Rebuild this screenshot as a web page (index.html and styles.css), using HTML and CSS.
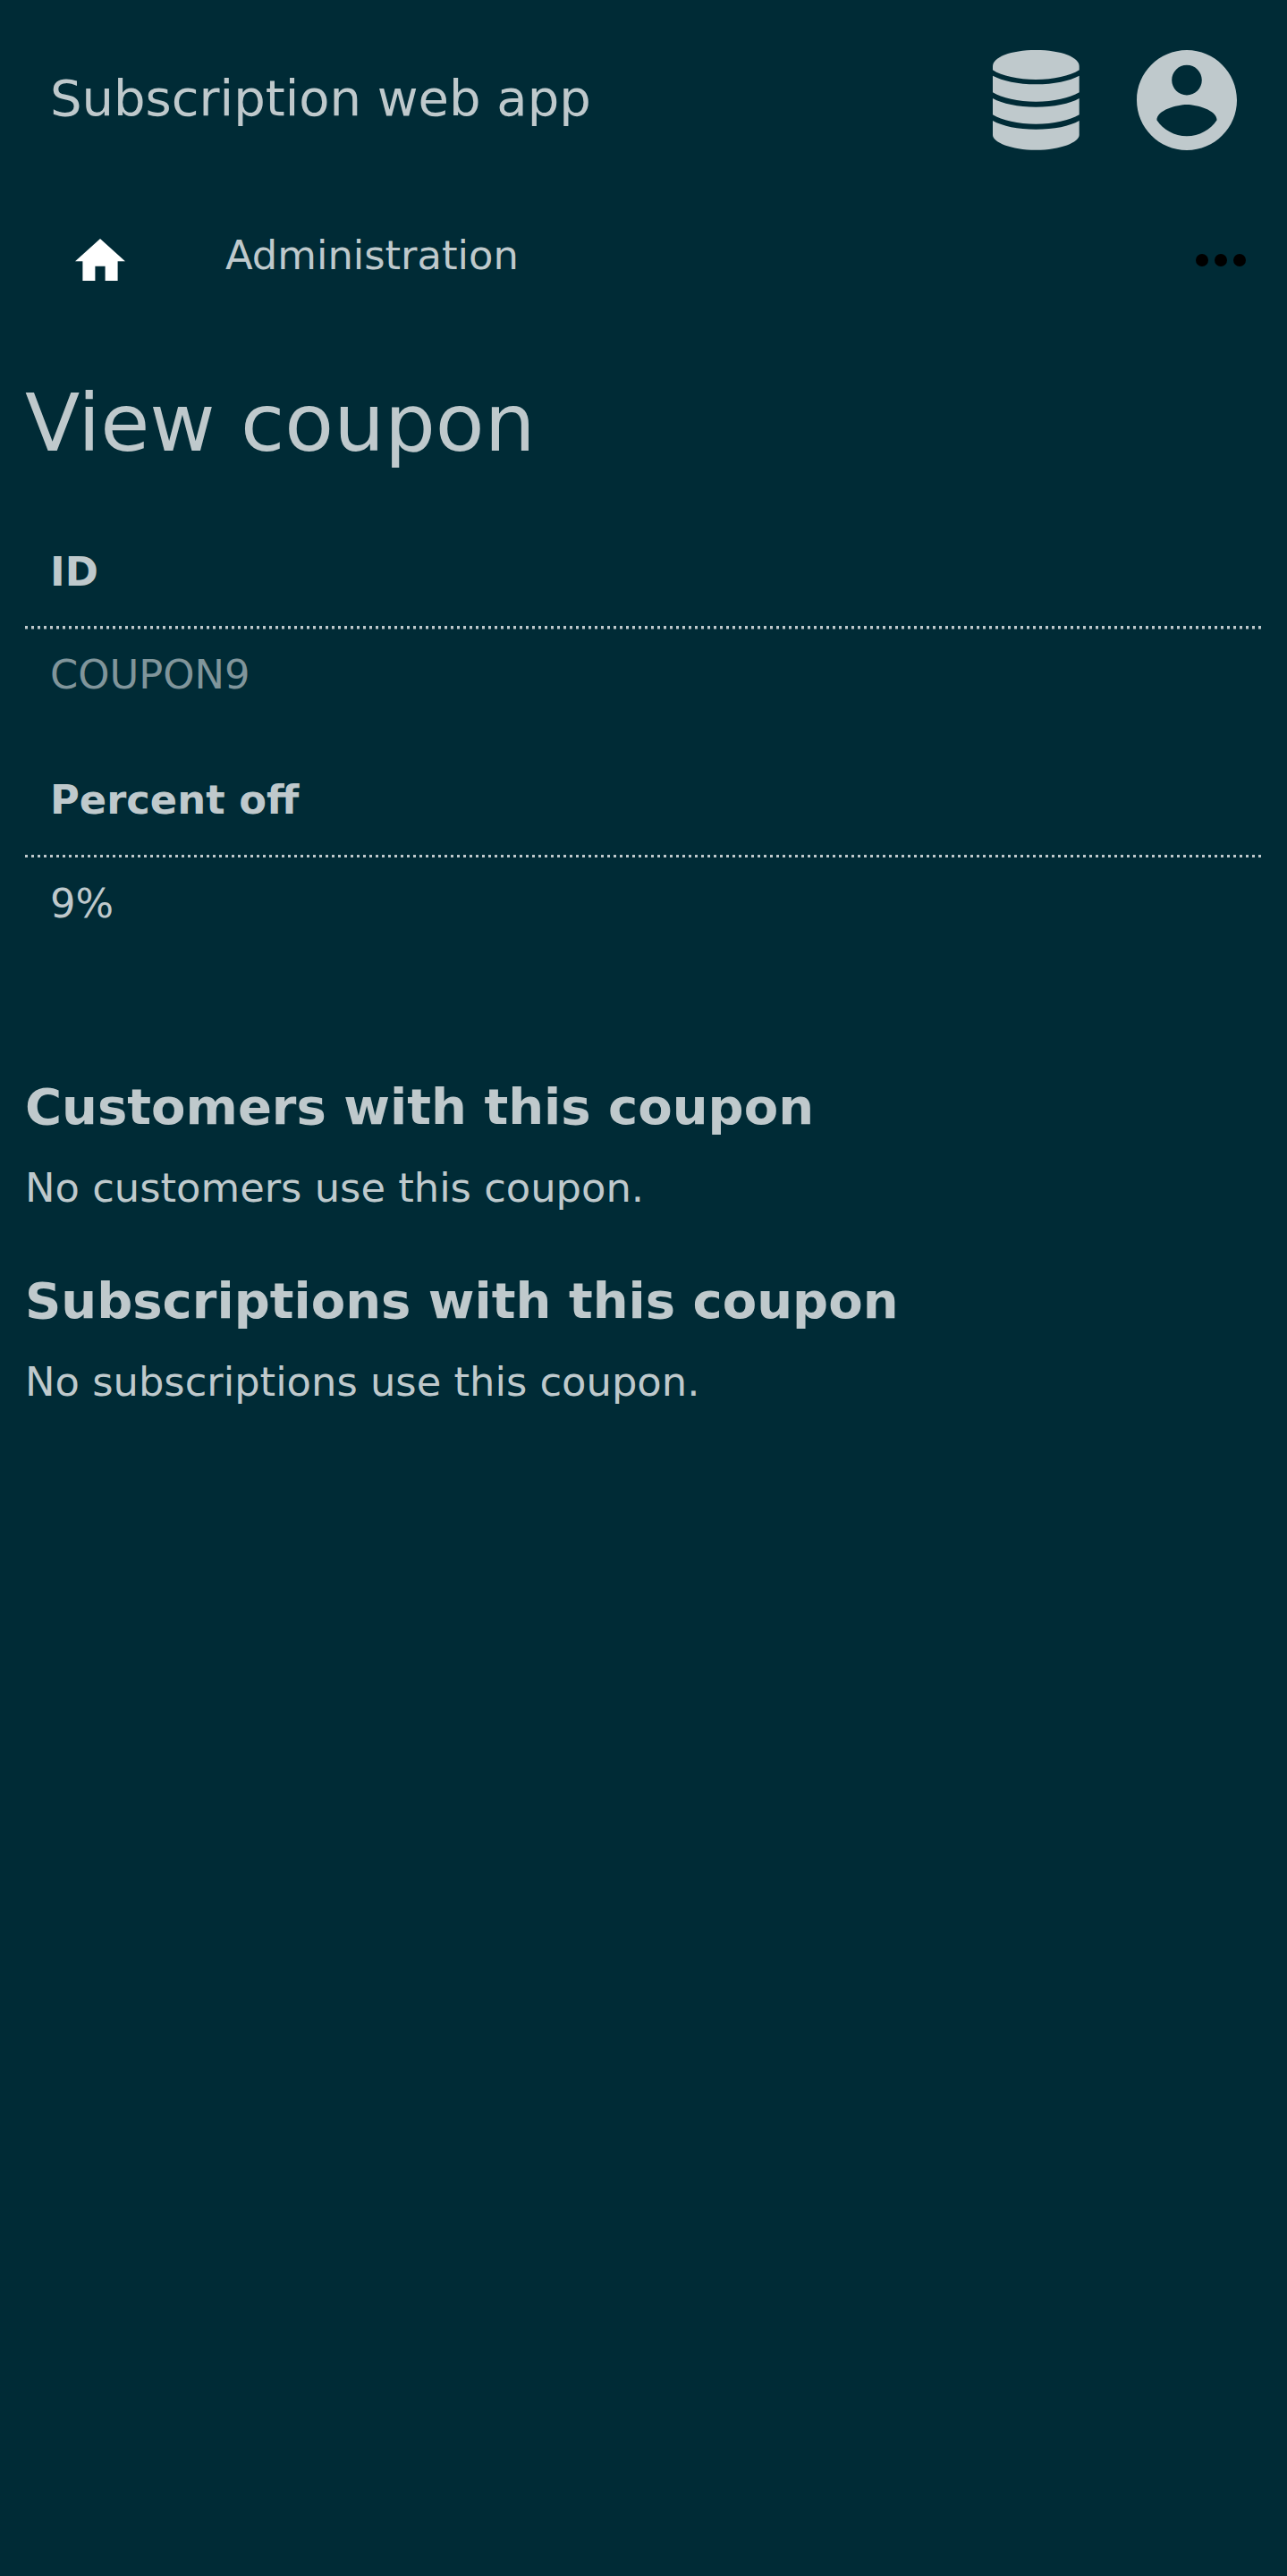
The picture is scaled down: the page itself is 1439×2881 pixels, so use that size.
FILE: index.html
```html
<!DOCTYPE html>
<html lang="en">
<head>
<meta charset="utf-8">
<title>View coupon</title>
<link rel="stylesheet" href="styles.css">
</head>
<body>
<header class="header">
  <div class="app-title">Subscription web app</div>
  <div class="menus">
    <svg class="database" viewBox="0 0 97 112" aria-label="Administrator">
      <path d="M0 18C0 8 20 0 48.3 0S96.7 8 96.7 18V22.3C86 29 68 33 48.3 33S10 29 0 22.3Z"/>
      <path d="M0 28.7C11 34.5 28 38.3 48.3 38.3S86 34.5 96.7 28.7V47.3C86 53.7 68 57.7 48.3 57.7S10 53.7 0 47.3Z"/>
      <path d="M0 54C11 60 28 63.7 48.3 63.7S86 60 96.7 54V72.3C86 78.7 68 82.7 48.3 82.7S10 78.7 0 72.3Z"/>
      <path d="M0 79C11 85 28 88.8 48.3 88.8S86 85 96.7 79V95C96.7 103 76 111.8 48.3 111.8S0 103 0 95Z"/>
    </svg>
    <svg class="account" viewBox="2 2 20 20" aria-label="Account">
      <path d="M12 2C6.48 2 2 6.48 2 12s4.48 10 10 10 10-4.48 10-10S17.52 2 12 2zm0 3c1.66 0 3 1.34 3 3s-1.34 3-3 3-3-1.34-3-3 1.34-3 3-3zm0 14.2c-2.5 0-4.71-1.28-6-3.22.03-1.99 4-3.08 6-3.08 1.99 0 5.97 1.09 6 3.08-1.29 1.94-3.5 3.22-6 3.22z"/>
    </svg>
  </div>
</header>
<nav class="nav">
  <svg class="home" viewBox="2 3 20 17" aria-label="Home"><path d="M10 20v-6h4v6h5v-8h3L12 3 2 12h3v8z"/></svg>
  <a class="nav-link">Administration</a>
  <svg class="more" viewBox="0 0 56 14" aria-label="More"><circle cx="7" cy="7" r="7"/><circle cx="28" cy="7" r="7"/><circle cx="49" cy="7" r="7"/></svg>
</nav>
<main class="content">
  <h1>View coupon</h1>
  <dl class="details">
    <dt>ID</dt>
    <dd class="muted">COUPON9</dd>
    <dt>Percent off</dt>
    <dd>9%</dd>
  </dl>
  <section>
    <h2>Customers with this coupon</h2>
    <p>No customers use this coupon.</p>
  </section>
  <section>
    <h2>Subscriptions with this coupon</h2>
    <p>No subscriptions use this coupon.</p>
  </section>
</main>
</body>
</html>
```
FILE: styles.css
```css
* { box-sizing: border-box; margin: 0; padding: 0; }
body {
  min-height: 2881px;
  background: #002b36;
  color: #bfc9cc;
  font: 44.8px/56px "DejaVu Sans", sans-serif;
}
.header {
  display: flex;
  justify-content: space-between;
  height: 224px;
  padding: 56px;
}
.app-title { font-size: 56px; line-height: 108px; }
.menus { display: flex; gap: 64px; fill: #bfc9cc; }
.database { width: 97px; height: 112px; }
.account { width: 112px; height: 112px; }
.nav {
  display: flex;
  align-items: flex-start;
  height: 168px;
  padding: 33px 46px 0 84px;
}
.home { width: 56px; height: 47.6px; margin-top: 9.8px; fill: #fff; }
.nav-link { margin-left: 112px; line-height: 57px; }
.more { width: 56px; height: 14px; margin: 26.5px 0 0 auto; fill: #000; }
.content { padding: 25px 28px 0; }
h1 { font-size: 89.6px; font-weight: 400; line-height: 112px; }
.details { padding-top: 82px; }
dt {
  height: 92.5px;
  margin-bottom: 23px;
  padding: 0.5px 28px 0;
  font-weight: 700;
  background: repeating-linear-gradient(90deg, #bfc9cc 0 3.5px, transparent 3.5px 7px) bottom / 100% 3.5px no-repeat;
}
dd { height: 140px; padding: 0.5px 28px 0; }
.muted { color: #80959b; }
section { height: 217px; }
.details + section { margin-top: 80.5px; }
h2 { font-size: 56px; line-height: 70px; margin-bottom: 28px; }
```
